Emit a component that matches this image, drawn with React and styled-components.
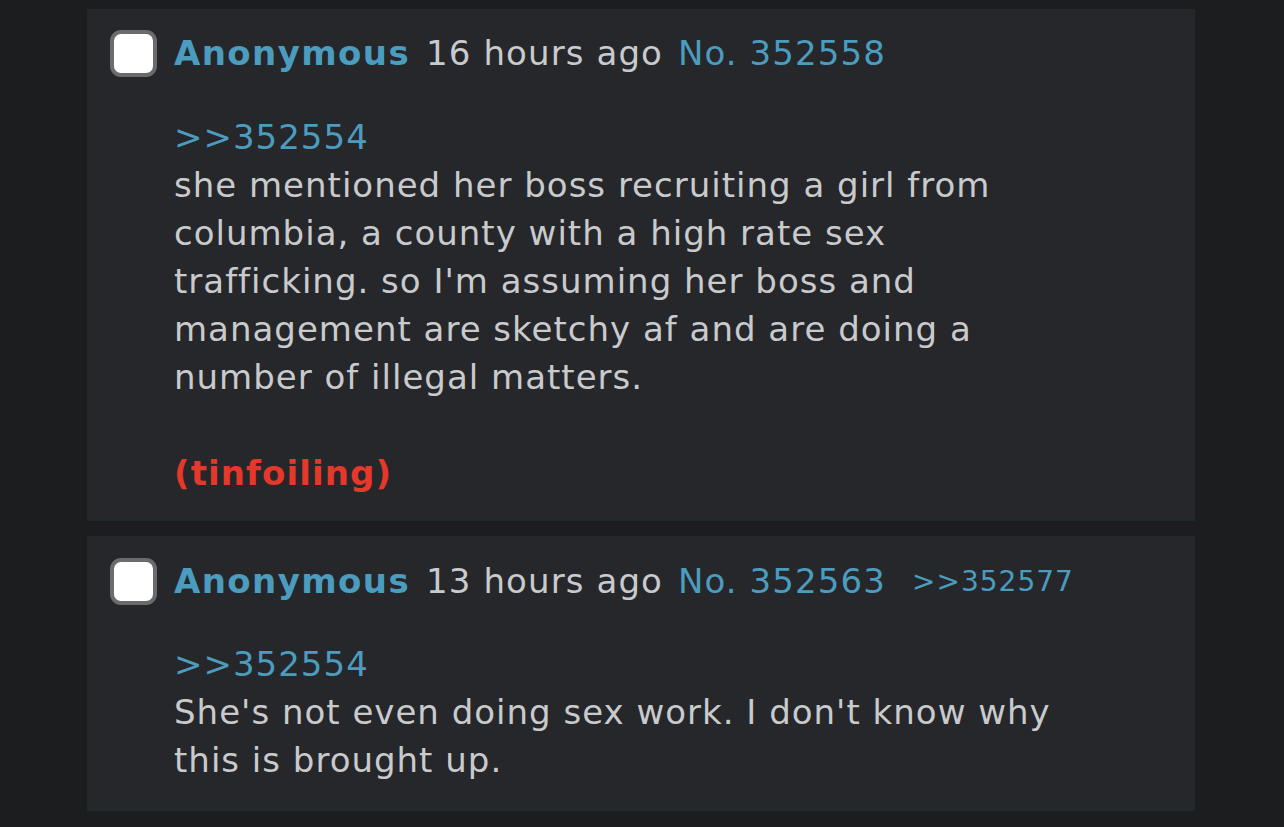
import React from 'react'
import styled, { createGlobalStyle } from 'styled-components'

const GlobalStyle = createGlobalStyle`
  html, body {
    margin: 0;
    padding: 0;
    background: #1c1d1f;
  }
  body {
    font-family: "DejaVu Sans", Verdana, sans-serif;
  }
`

const Thread = styled.div`
  width: 1108px;
  margin: 0 0 0 87px;
  padding-top: 9px;
  display: flex;
  flex-direction: column;
  gap: 15px;
`

const Post = styled.div`
  background: #26272b;
  border-bottom: 2px solid #1f2a2b;
  padding: ${p => p.$top}px 24px ${p => p.$bottom}px 23px;
`

const Header = styled.div`
  display: flex;
  align-items: center;
  height: 48px;
  font-size: 34px;
  letter-spacing: 1.1px;
  color: #c9cacc;
  white-space: nowrap;
`

const Check = styled.span`
  box-sizing: border-box;
  width: 47px;
  height: 47px;
  border: 4px solid #6b6b6e;
  border-radius: 11px;
  background: #fff;
  margin-right: 17px;
  flex-shrink: 0;
`

const Name = styled.span`
  font-weight: bold;
  letter-spacing: 1.4px;
  color: #4b9cbf;
  margin-right: 16px;
`

const Time = styled.span`
  margin-right: 15px;
`

const Num = styled.span`
  color: #4b9cbf;
`

const Backlink = styled.span`
  color: #4b9cbf;
  font-size: 28px;
  letter-spacing: 1px;
  margin-left: 26px;
`

const Body = styled.div`
  margin-top: ${p => p.$gap}px;
  padding-left: 64px;
  font-size: 34px;
  letter-spacing: 1px;
  line-height: 48px;
  color: #c9cacc;
`

const Quote = styled.div`
  color: #4b9cbf;
`

const Red = styled.div`
  color: #e5372a;
  font-weight: bold;
  letter-spacing: 1.1px;
`

const Spacer = styled.div`
  height: 48px;
`

export default function App() {
  return (
    <>
      <GlobalStyle />
      <Thread>
        <Post $top={20} $bottom={22}>
          <Header>
            <Check />
            <Name>Anonymous</Name>
            <Time>16 hours ago</Time>
            <Num>No. 352558</Num>
          </Header>
          <Body $gap={36}>
            <Quote>&gt;&gt;352554</Quote>
            she mentioned her boss recruiting a girl from
            <br />
            columbia, a county with a high rate sex
            <br />
            trafficking. so I'm assuming her boss and
            <br />
            management are sketchy af and are doing a
            <br />
            number of illegal matters.
            <Spacer />
            <Red>(tinfoiling)</Red>
          </Body>
        </Post>
        <Post $top={21} $bottom={25}>
          <Header>
            <Check />
            <Name>Anonymous</Name>
            <Time>13 hours ago</Time>
            <Num>No. 352563</Num>
            <Backlink>&gt;&gt;352577</Backlink>
          </Header>
          <Body $gap={35}>
            <Quote>&gt;&gt;352554</Quote>
            She's not even doing sex work. I don't know why
            <br />
            this is brought up.
          </Body>
        </Post>
      </Thread>
    </>
  )
}
